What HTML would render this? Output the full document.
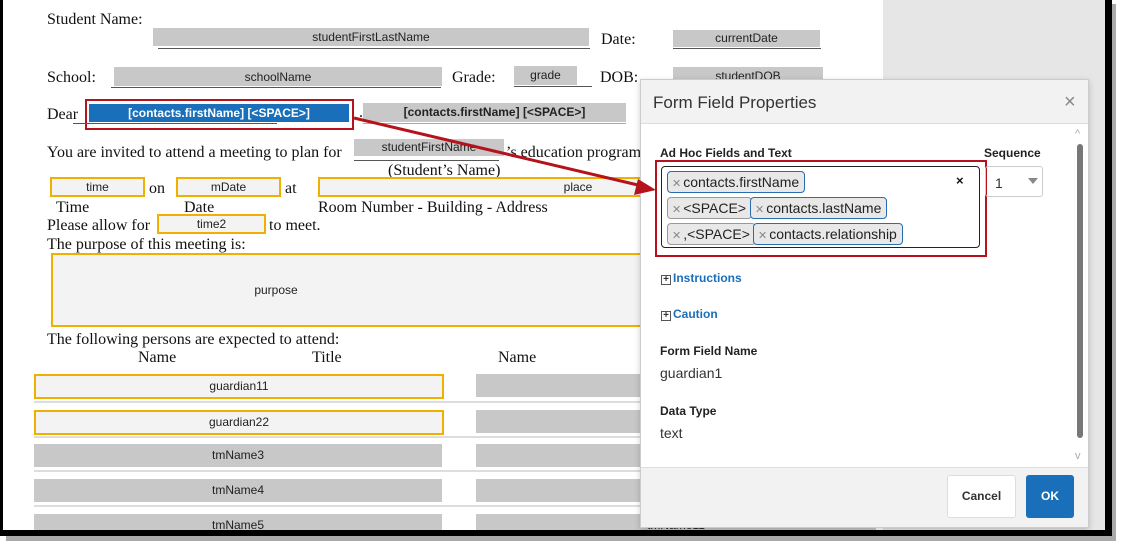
<!DOCTYPE html><html><head><style>
*{margin:0;padding:0;box-sizing:border-box}
body{width:1122px;height:549px;background:#fff;position:relative;overflow:hidden;font-family:"Liberation Serif",serif}
.a{position:absolute}
.s{font-size:16px;color:#111;white-space:nowrap;line-height:1}
.f{position:absolute;background:#c8c8c8;font-family:"Liberation Sans",sans-serif;font-size:12px;color:#222;text-align:center;white-space:nowrap;overflow:hidden}
.o{background:#f3f3f3;border:2px solid #f0b000}
.ul{position:absolute;height:1px;background:#555}
.r{font-family:"Liberation Sans",sans-serif}
.chip{position:absolute;height:22px;border:1px solid #999;background:#e8e8e8;border-radius:4px;font-size:14px;color:#222;padding:0 5px 0 4px;line-height:20px;white-space:nowrap;font-family:"Liberation Sans",sans-serif}
.chip.b{border-color:#2a6cb0}
.chip i{font-style:normal;color:#888;font-size:11px;margin-right:2px}
.lbl{position:absolute;font-family:"Liberation Sans",sans-serif;font-weight:bold;font-size:12px;color:#222}
</style></head><body>
<div class="a" style="left:0;top:0;width:3px;height:536px;background:#000"></div>
<div class="a" style="left:883px;top:0;width:222px;height:530px;background:#e6e6e6"></div>
<div class="a" style="left:1105px;top:0;width:7px;height:536px;background:#000"></div>
<div class="a" style="left:0;top:530px;width:1112px;height:6px;background:#000"></div>
<div class="a" style="left:6px;top:536px;width:1110px;height:5px;background:#aaa"></div>
<div class="a" style="left:1112px;top:4px;width:4px;height:537px;background:#aaa"></div>

<div class="a s" style="left:47px;top:12px">Student Name:</div>
<div class="f" style="left:153px;top:28px;width:436px;height:18px;line-height:18px">studentFirstLastName</div>
<div class="ul" style="left:158px;top:48px;width:432px"></div>
<div class="a s" style="left:601px;top:32px">Date:</div>
<div class="f" style="left:673px;top:30px;width:147px;height:17px;line-height:17px">currentDate</div>
<div class="ul" style="left:673px;top:48px;width:148px"></div>

<div class="a s" style="left:47px;top:70px">School:</div>
<div class="f" style="left:114px;top:67px;width:328px;height:19px;line-height:21px">schoolName</div>
<div class="ul" style="left:111px;top:87px;width:330px"></div>
<div class="a s" style="left:452px;top:70px">Grade:</div>
<div class="f" style="left:514px;top:66px;width:63px;height:19px;line-height:19px">grade</div>
<div class="ul" style="left:514px;top:86px;width:78px"></div>
<div class="a s" style="left:600px;top:70px">DOB:</div>
<div class="f" style="left:673px;top:67px;width:150px;height:19px;line-height:19px">studentDOB</div>

<div class="a s" style="left:47px;top:107px">Dear</div>
<div class="a" style="left:85px;top:99px;width:269px;height:31px;border:2px solid #b5121b"></div>
<div class="f" style="left:89px;top:104px;width:260px;height:18px;line-height:18px;background:#1a6fba;color:#fff;font-weight:bold">[contacts.firstName] [&lt;SPACE&gt;]</div>
<div class="ul" style="left:73px;top:123px;width:204px"></div>
<div class="a s" style="left:359px;top:105px">.</div>
<div class="f" style="left:363px;top:103px;width:263px;height:19px;line-height:19px;font-weight:bold">[contacts.firstName] [&lt;SPACE&gt;]</div>
<div class="ul" style="left:363px;top:123px;width:263px;background:#aaa"></div>

<div class="a s" style="left:47px;top:145px">You are invited to attend a meeting to plan for</div>
<div class="f" style="left:354px;top:139px;width:150px;height:17px;line-height:17px">studentFirstName</div>
<div class="ul" style="left:354px;top:160px;width:145px"></div>
<div class="a s" style="left:506px;top:145px">’s education program</div>
<div class="a s" style="left:388px;top:163px">(Student’s Name)</div>

<div class="f o" style="left:50px;top:177px;width:95px;height:20px;line-height:17px">time</div>
<div class="a s" style="left:149px;top:181px">on</div>
<div class="f o" style="left:176px;top:177px;width:105px;height:20px;line-height:17px">mDate</div>
<div class="a s" style="left:285px;top:181px">at</div>
<div class="f o" style="left:318px;top:177px;width:340px;height:20px;line-height:17px;padding-left:180px">place</div>
<div class="a s" style="left:56px;top:200px">Time</div>
<div class="a s" style="left:184px;top:200px">Date</div>
<div class="a s" style="left:318px;top:200px">Room Number - Building - Address</div>
<div class="a s" style="left:47px;top:218px">Please allow for</div>
<div class="f o" style="left:157px;top:214px;width:109px;height:20px;line-height:17px">time2</div>
<div class="a s" style="left:269px;top:218px">to meet.</div>
<div class="a s" style="left:47px;top:237px">The purpose of this meeting is:</div>
<div class="f o" style="left:51px;top:253px;width:620px;height:74px;line-height:70px;padding-right:170px">purpose</div>

<div class="a s" style="left:47px;top:332px">The following persons are expected to attend:</div>
<div class="a s" style="left:138px;top:350px">Name</div>
<div class="a s" style="left:312px;top:350px">Title</div>
<div class="a s" style="left:498px;top:350px">Name</div>

<div class="f o" style="left:34px;top:374px;width:410px;height:25px;line-height:21px">guardian11</div>
<div class="f o" style="left:34px;top:410px;width:410px;height:25px;line-height:21px">guardian22</div>
<div class="f" style="left:34px;top:444px;width:408px;height:23px;line-height:23px">tmName3</div>
<div class="f" style="left:34px;top:479px;width:408px;height:23px;line-height:23px">tmName4</div>
<div class="f" style="left:34px;top:514px;width:408px;height:16px;line-height:22px">tmName5</div>
<div class="f" style="left:476px;top:374px;width:180px;height:23px"></div>
<div class="f" style="left:476px;top:410px;width:180px;height:23px"></div>
<div class="f" style="left:476px;top:444px;width:180px;height:23px"></div>
<div class="f" style="left:476px;top:479px;width:180px;height:23px"></div>
<div class="f" style="left:476px;top:514px;width:400px;height:16px;line-height:22px">tmName11</div>
<div class="a" style="left:34px;top:401px;width:610px;height:2px;background:#ddd"></div>
<div class="a" style="left:34px;top:436px;width:610px;height:2px;background:#ddd"></div>
<div class="a" style="left:34px;top:470px;width:610px;height:2px;background:#ddd"></div>
<div class="a" style="left:34px;top:505px;width:610px;height:2px;background:#ddd"></div>

<!-- modal -->
<div class="a r" style="left:640px;top:79px;width:449px;height:449px;background:#fff;border:1px solid #ccc;box-shadow:0 2px 6px rgba(0,0,0,.2)">
 <div class="a" style="left:0;top:0;width:447px;height:44px;background:#f2f2f2;border-bottom:1px solid #ddd"></div>
 <div class="a" style="left:12px;top:13px;font-size:17px;color:#333">Form Field Properties</div>
 <div class="a" style="left:423px;top:11px;font-size:20px;color:#888">×</div>
 <div class="lbl" style="left:19px;top:66px">Ad Hoc Fields and Text</div>
 <div class="lbl" style="left:343px;top:66px">Sequence</div>
 <div class="a" style="left:14px;top:80px;width:332px;height:97px;border:2px solid #b5121b"></div>
 <div class="a" style="left:20px;top:86px;width:319px;height:82px;border:1px solid #222;border-radius:4px"></div>
 <div class="chip b" style="left:26px;top:91px"><i>✕</i>contacts.firstName</div>
 <div class="a" style="left:315px;top:93px;font-size:13px;font-weight:bold;color:#111">×</div>
 <div class="chip" style="left:26px;top:117px"><i>✕</i>&lt;SPACE&gt;</div>
 <div class="chip b" style="left:109px;top:117px"><i>✕</i>contacts.lastName</div>
 <div class="chip" style="left:26px;top:143px"><i>✕</i>,&lt;SPACE&gt;</div>
 <div class="chip b" style="left:112px;top:143px"><i>✕</i>contacts.relationship</div>
 <div class="a" style="left:344px;top:86px;width:58px;height:31px;border:1px solid #ccc;border-radius:3px;font-size:14px;color:#333;padding:8px 0 0 9px">1</div>
 <div class="a" style="left:387px;top:98px;width:0;height:0;border-left:5px solid transparent;border-right:5px solid transparent;border-top:6px solid #888"></div>
 <div class="a" style="left:436px;top:64px;width:6px;height:294px;background:#777;border-radius:3px"></div>
 <div class="a" style="left:434px;top:48px;font-size:11px;color:#aaa">^</div>
 <div class="a" style="left:434px;top:370px;font-size:11px;color:#aaa">v</div>
 <div class="a" style="left:20px;top:191px;font-size:12px;font-weight:bold;color:#1a6fba"><span style="display:inline-block;width:10px;height:10px;border:1px solid #555;font-size:10px;line-height:8px;text-align:center;color:#333;margin-right:2px">+</span>Instructions</div>
 <div class="a" style="left:20px;top:227px;font-size:12px;font-weight:bold;color:#1a6fba"><span style="display:inline-block;width:10px;height:10px;border:1px solid #555;font-size:10px;line-height:8px;text-align:center;color:#333;margin-right:2px">+</span>Caution</div>
 <div class="lbl" style="left:19px;top:264px">Form Field Name</div>
 <div class="a" style="left:19px;top:285px;font-size:14px;color:#333">guardian1</div>
 <div class="lbl" style="left:19px;top:324px">Data Type</div>
 <div class="a" style="left:19px;top:345px;font-size:14px;color:#333">text</div>
 <div class="a" style="left:0;top:387px;width:447px;height:60px;background:#f2f2f2;border-top:1px solid #ddd"></div>
 <div class="a" style="left:306px;top:395px;width:69px;height:43px;background:#fff;border:1px solid #ddd;border-radius:3px;font-size:12px;font-weight:bold;color:#333;text-align:center;line-height:41px">Cancel</div>
 <div class="a" style="left:385px;top:395px;width:48px;height:43px;background:#1a6fba;border-radius:3px;font-size:12px;font-weight:bold;color:#fff;text-align:center;line-height:43px">OK</div>
</div>
<svg class="a" style="left:0;top:0" width="1122" height="549"><line x1="354" y1="118" x2="642" y2="186" stroke="#b5121b" stroke-width="3"/><polygon points="656,190 638,179 634,195" fill="#b5121b"/></svg>
</body></html>
